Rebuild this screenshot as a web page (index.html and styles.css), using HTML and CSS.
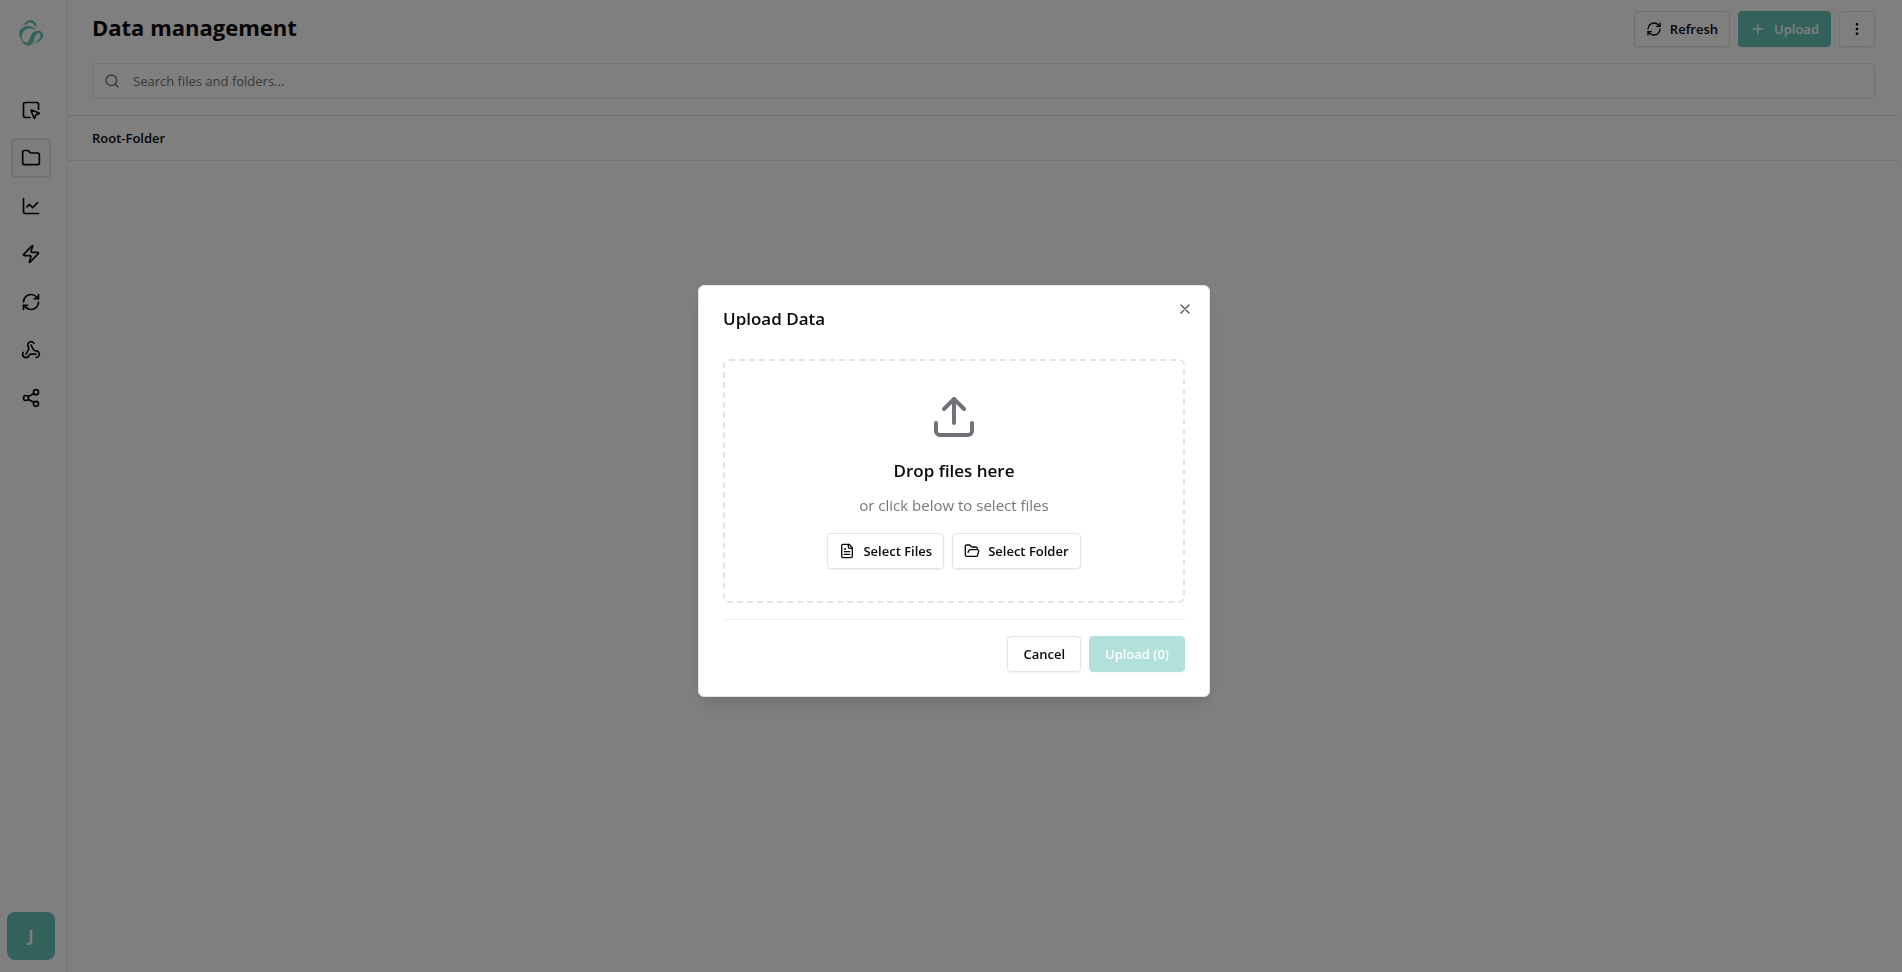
FILE: index.html
```html
<!DOCTYPE html>
<html lang="en">
<head>
<meta charset="utf-8">
<meta name="viewport" content="width=device-width, initial-scale=1">
<title>Data management</title>
<link rel="stylesheet" href="styles.css">
</head>
<body>
<div class="app">
  <aside class="sidebar">
    <a class="logo" href="#" aria-label="Home">
      <svg viewBox="0 0 28 28" fill="none">
        <path class="logo-fill" d="M5.300 5.600C8.500 4.500 9.500 1 13.300 1C17 1 19.300 3.800 19.800 8C17 7.200 16.500 3.400 13.300 3.400C10.500 3.400 9 6.500 5.300 5.600Z"/>
        <path class="logo-fill" d="M18.300 10.800C15.500 9.300 11.500 8.600 8 11C4.500 13.800 4 18 6 22C2.500 19 1 14.500 3.500 10.600C7 5.500 15.500 5.800 18.300 10.800Z"/>
        <path class="logo-fill" d="M4 19.500C6 22.500 8.500 24.200 10.500 23.200C13.500 21.500 12.500 15.500 17.500 12.600C21.500 10.500 26.500 12 26.200 16.500C25.800 20.500 21.500 23.500 17 24.300C20.500 22 23.500 19.500 23.600 16.500C23.600 14.300 21 13.700 19.200 15.200C16.500 17.500 18 22.500 14.500 25.500C10.500 28.500 5.500 25.500 4 19.500Z"/>
      </svg>
    </a>
    <nav class="nav" aria-label="Main">
      <a class="nav-item" href="#" aria-label="Workspace"><svg class="icon" viewBox="0 0 24 24"><path d="M12.034 12.681a.498.498 0 0 1 .647-.647l9 3.500a.5.500 0 0 1-.033.943l-3.444 1.068a1 1 0 0 0-.660.660l-1.067 3.443a.5.500 0 0 1-.943.033z"/><path d="M21 11V5a2 2 0 0 0-2-2H5a2 2 0 0 0-2 2v14a2 2 0 0 0 2 2h6"/></svg></a>
      <a class="nav-item active" href="#" aria-label="Data management" aria-current="page"><svg class="icon" viewBox="0 0 24 24"><path d="M20 20a2 2 0 0 0 2-2V8a2 2 0 0 0-2-2h-7.900a2 2 0 0 1-1.690-.900L9.600 3.900A2 2 0 0 0 7.930 3H4a2 2 0 0 0-2 2v13a2 2 0 0 0 2 2Z"/></svg></a>
      <a class="nav-item" href="#" aria-label="Charts"><svg class="icon" viewBox="0 0 24 24"><path d="M3 3v16a2 2 0 0 0 2 2h16"/><path d="m7 13 3-3 4 4 6-6"/></svg></a>
      <a class="nav-item" href="#" aria-label="Actions"><svg class="icon" viewBox="0 0 24 24"><path d="M4 14a1 1 0 0 1-.780-1.630l9.900-10.200a.5.500 0 0 1 .860.460l-1.920 6.020A1 1 0 0 0 13 10h7a1 1 0 0 1 .780 1.630l-9.900 10.200a.5.500 0 0 1-.860-.460l1.920-6.020A1 1 0 0 0 11 14z"/></svg></a>
      <a class="nav-item" href="#" aria-label="Sync"><svg class="icon" viewBox="0 0 24 24"><path d="M3 12a9 9 0 0 1 9-9 9.750 9.750 0 0 1 6.740 2.740L21 8"/><path d="M21 3v5h-5"/><path d="M21 12a9 9 0 0 1-9 9 9.750 9.750 0 0 1-6.740-2.740L3 16"/><path d="M8 16H3v5"/></svg></a>
      <a class="nav-item" href="#" aria-label="Webhooks"><svg class="icon" viewBox="0 0 24 24"><path d="M18 16.980h-5.990c-1.100 0-1.950.940-2.480 1.900A4 4 0 0 1 2 17c.010-.700.200-1.400.570-2"/><path d="m6 17 3.130-5.780c.530-.970.100-2.180-.500-3.100a4 4 0 1 1 6.890-4.060"/><path d="m12 6 3.130 5.730C15.660 12.700 16.900 13 18 13a4 4 0 0 1 0 8"/></svg></a>
      <a class="nav-item" href="#" aria-label="Share"><svg class="icon" viewBox="0 0 24 24"><circle cx="18" cy="5" r="3"/><circle cx="6" cy="12" r="3"/><circle cx="18" cy="19" r="3"/><path d="m8.590 13.510 6.830 3.980M15.410 6.510l-6.820 3.980"/></svg></a>
    </nav>
    <button class="avatar" type="button">J</button>
  </aside>
  <main class="main">
    <header class="header">
      <div class="title-row">
        <h1 class="page-title">Data management</h1>
        <div class="actions">
          <button class="btn" type="button"><svg class="icon small" viewBox="0 0 24 24"><path d="M3 12a9 9 0 0 1 9-9 9.750 9.750 0 0 1 6.740 2.740L21 8"/><path d="M21 3v5h-5"/><path d="M21 12a9 9 0 0 1-9 9 9.750 9.750 0 0 1-6.740-2.740L3 16"/><path d="M8 16H3v5"/></svg>Refresh</button>
          <button class="btn primary" type="button"><svg class="icon small" viewBox="0 0 24 24"><path d="M5 12h14M12 5v14"/></svg>Upload</button>
          <button class="btn square" type="button" aria-label="More options"><svg class="icon small" viewBox="0 0 24 24"><circle cx="12" cy="12" r="1"/><circle cx="12" cy="5" r="1"/><circle cx="12" cy="19" r="1"/></svg></button>
        </div>
      </div>
      <label class="search">
        <svg class="icon small" viewBox="0 0 24 24"><circle cx="11" cy="11" r="8"/><path d="m21 21-4.300-4.300"/></svg>
        <input class="search-input" type="text" aria-label="Search files and folders" placeholder="Search files and folders...">
      </label>
    </header>
    <div class="breadcrumb"><a class="crumb" href="#">Root-Folder</a></div>
  </main>
</div>
<div class="overlay">
  <section class="dialog" role="dialog" aria-modal="true" aria-labelledby="dialog-title">
    <h2 class="dialog-title" id="dialog-title">Upload Data</h2>
    <button class="close" type="button" aria-label="Close"><svg class="icon small" viewBox="0 0 24 24"><path d="M18 6 6 18M6 6l12 12"/></svg></button>
    <div class="dropzone">
      <svg class="icon large" viewBox="0 0 24 24"><path d="M21 15v4a2 2 0 0 1-2 2H5a2 2 0 0 1-2-2v-4"/><path d="m17 8-5-5-5 5"/><path d="M12 3v12"/></svg>
      <h3 class="drop-title">Drop files here</h3>
      <p class="drop-text">or click below to select files</p>
      <div class="drop-actions">
        <button class="btn" type="button"><svg class="icon small" viewBox="0 0 24 24"><path d="M15 2H6a2 2 0 0 0-2 2v16a2 2 0 0 0 2 2h12a2 2 0 0 0 2-2V7Z"/><path d="M14 2v4a2 2 0 0 0 2 2h4M10 9H8M16 13H8M16 17H8"/></svg>Select Files</button>
        <button class="btn" type="button"><svg class="icon small" viewBox="0 0 24 24"><path d="m6 14 1.500-2.900A2 2 0 0 1 9.240 10H20a2 2 0 0 1 1.940 2.500l-1.540 6a2 2 0 0 1-1.950 1.500H4a2 2 0 0 1-2-2V5a2 2 0 0 1 2-2h3.900a2 2 0 0 1 1.690.900l.810 1.200a2 2 0 0 0 1.670.900H18a2 2 0 0 1 2 2v2"/></svg>Select Folder</button>
      </div>
    </div>
    <footer class="dialog-footer">
      <button class="btn wide" type="button">Cancel</button>
      <button class="btn wide primary" type="button" disabled>Upload (0)</button>
    </footer>
  </section>
</div>
</body>
</html>
```
FILE: styles.css
```css
*, *::before, *::after { box-sizing: border-box; }

:root {
  --teal: #66c5b6;
  --border: #e4e4e7;
  --text: #09090b;
  --muted: #71717a;
}

body {
  margin: 0;
  color: var(--text);
  background: #fff;
  font-family: "Segoe UI", "Open Sans", sans-serif;
  font-size: 13px;
  line-height: 20px;
}

h1, h2, h3, p { margin: 0; }
a { color: inherit; text-decoration: none; }
button, input { font: inherit; color: inherit; }

.icon {
  width: 20px;
  height: 20px;
  flex: none;
  fill: none;
  stroke: currentColor;
  stroke-width: 2;
  stroke-linecap: round;
  stroke-linejoin: round;
}
.icon.small { width: 16px; height: 16px; }
.icon.large { width: 48px; height: 48px; color: var(--muted); }

.app { display: flex; min-height: 100vh; padding-right: 3px; }

.sidebar {
  display: flex;
  flex-direction: column;
  align-items: center;
  flex: none;
  width: 68px;
  padding: 19px 12px 12px 7px;
  border-right: 1px solid var(--border);
}
.logo { width: 28px; height: 28px; }
.logo svg { display: block; width: 28px; height: 28px; }
.logo-fill { fill: var(--teal); }
.nav { display: flex; flex-direction: column; gap: 8px; margin-top: 43px; }
.nav-item {
  display: flex;
  align-items: center;
  justify-content: center;
  width: 40px;
  height: 40px;
  border: 2px solid transparent;
  border-radius: 4px;
}
.nav-item.active { border-color: var(--border); background: #fafafa; }
.avatar {
  width: 48px;
  height: 48px;
  margin-top: auto;
  border: 0;
  border-radius: 8px;
  color: #fff;
  background: var(--teal);
  font-size: 16px;
  font-weight: 700;
}

.main { flex: 1; min-width: 0; }
.header { padding: 11px 24px 16px; border-bottom: 1px solid var(--border); }
.title-row { display: flex; align-items: flex-start; justify-content: space-between; }
.page-title { font-size: 22px; font-weight: 700; line-height: 32px; }
.actions, .drop-actions { display: flex; gap: 8px; }

.btn {
  display: inline-flex;
  align-items: center;
  justify-content: center;
  gap: 8px;
  height: 36px;
  padding: 0 11px;
  border: 1px solid var(--border);
  border-radius: 4px;
  background: #fff;
  box-shadow: 0 1px 2px rgba(0, 0, 0, 0.06);
  font-weight: 600;
  white-space: nowrap;
}
.btn.square { width: 36px; padding: 0; }
.btn.wide { padding: 0 15px; }
.btn.primary { border-color: var(--teal); background: var(--teal); color: #fff; }
.btn:disabled { opacity: 0.5; }

.search {
  display: flex;
  align-items: center;
  gap: 13px;
  height: 36px;
  margin-top: 16px;
  padding: 0 11px;
  border: 1px solid var(--border);
  border-radius: 4px;
  color: var(--muted);
}
.search-input { flex: 1; min-width: 0; padding: 0; border: 0; outline: 0; background: none; }
.search-input::placeholder { color: var(--muted); opacity: 1; }

.breadcrumb { padding: 12px 24px; border-bottom: 1px solid var(--border); }
.crumb { font-weight: 600; }

.overlay {
  position: fixed;
  inset: 0;
  display: flex;
  align-items: center;
  justify-content: center;
  padding: 9px 0 0 6px;
  background: rgba(0, 0, 0, 0.5);
}
.dialog {
  position: relative;
  width: 512px;
  max-width: 100%;
  padding: 24px;
  border: 1px solid var(--border);
  border-radius: 6px;
  background: #fff;
  box-shadow: 0 10px 15px -3px rgba(0, 0, 0, 0.1), 0 4px 6px -4px rgba(0, 0, 0, 0.1);
}
.dialog-title { font-size: 17px; font-weight: 600; line-height: 18px; }
.close {
  position: absolute;
  top: 15px;
  right: 16px;
  display: flex;
  padding: 0;
  border: 0;
  background: none;
  color: #52525b;
}
.dropzone {
  display: flex;
  flex-direction: column;
  align-items: center;
  margin-top: 31px;
  padding: 32px;
  border: 2px dashed var(--border);
  border-radius: 6px;
}
.drop-title { margin-top: 16px; font-size: 17px; font-weight: 600; line-height: 28px; }
.drop-text { margin-top: 8px; color: #77777a; font-size: 15px; line-height: 24px; }
.drop-actions { margin-top: 16px; }
.dialog-footer {
  display: flex;
  justify-content: flex-end;
  gap: 8px;
  margin-top: 16px;
  padding-top: 16px;
  border-top: 1px solid #f0f0f2;
}
```
